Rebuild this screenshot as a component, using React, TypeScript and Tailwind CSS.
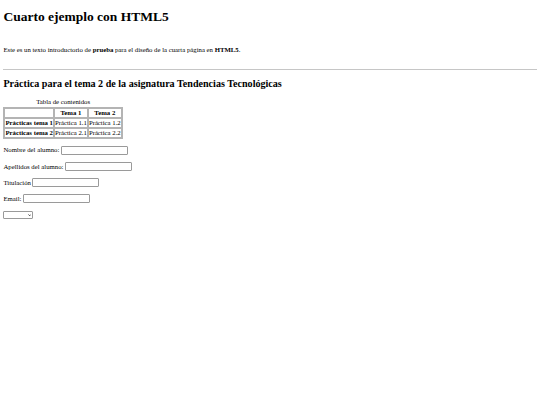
export default function App() {
  return (
    <div className="min-h-screen bg-white px-[3.4px] pt-[8.5px] font-['Liberation_Serif',serif] text-[6.75px] leading-[7.8px] text-black">
      <header>
        <h1 className="text-[13.5px] leading-[15.5px] font-bold">Cuarto ejemplo con HTML5</h1>
      </header>

      <p className="mt-[22.3px]">
        Este es un texto introductorio de <b>prueba</b> para el diseño de la cuarta página en <b>HTML5</b>.
      </p>

      <hr className="mt-[14.5px] h-px border-0 bg-[#c6c6c6]" />

      <section>
        <h2 className="mt-[8.8px] text-[10.1px] leading-[11.6px] font-bold">
          Práctica para el tema 2 de la asignatura Tendencias Tecnológicas
        </h2>

        <table className="mt-[8.5px] border-separate border-spacing-[0.5px] border border-[#b4b4b4] leading-[8px]">
          <caption className="pb-[1px] leading-[7.8px]">Tabla de contenidos</caption>
          <thead>
            <tr>
              <th className="border border-[#b4b4b4] p-0"></th>
              <th className="border border-[#b4b4b4] p-0">Tema 1</th>
              <th className="border border-[#b4b4b4] p-0">Tema 2</th>
            </tr>
          </thead>
          <tbody>
            <tr>
              <th className="border border-[#b4b4b4] p-0">Prácticas tema 1</th>
              <td className="border border-[#b4b4b4] p-0">Práctica 1.1</td>
              <td className="border border-[#b4b4b4] p-0">Práctica 1.2</td>
            </tr>
            <tr>
              <th className="border border-[#b4b4b4] p-0">Prácticas tema 2</th>
              <td className="border border-[#b4b4b4] p-0">Práctica 2.1</td>
              <td className="border border-[#b4b4b4] p-0">Práctica 2.2</td>
            </tr>
          </tbody>
        </table>

        <form className="mt-[6px] flex flex-col gap-[6.2px]">
          <label className="flex h-[10px] items-center gap-[1.7px]">
            Nombre del alumno:
            <input type="text" className="h-[9px] w-[67px] rounded-[1px] border border-[#9a9a9a] bg-white" />
          </label>
          <label className="flex h-[10px] items-center gap-[1.7px]">
            Apellidos del alumno:
            <input type="text" className="h-[9px] w-[67px] rounded-[1px] border border-[#9a9a9a] bg-white" />
          </label>
          <label className="flex h-[10px] items-center gap-[1px]">
            Titulación
            <input type="text" className="h-[9px] w-[67px] rounded-[1px] border border-[#9a9a9a] bg-white" />
          </label>
          <label className="flex h-[10px] items-center gap-[1.7px]">
            Email:
            <input type="email" className="h-[9px] w-[67px] rounded-[1px] border border-[#9a9a9a] bg-white" />
          </label>
          <div className="flex h-[10px] items-center">
            <div className="relative h-[8.5px] w-[30px]">
              <select className="h-full w-full appearance-none rounded-[1px] border border-[#9a9a9a] bg-white"></select>
              <svg
                viewBox="0 0 10 6"
                className="pointer-events-none absolute right-[2.5px] top-[3px] h-[2.2px] w-[3.4px]"
              >
                <path d="M1 1 L5 5 L9 1" fill="none" stroke="#000" strokeWidth="2" />
              </svg>
            </div>
          </div>
        </form>
      </section>
    </div>
  );
}
